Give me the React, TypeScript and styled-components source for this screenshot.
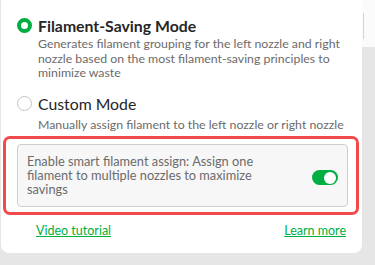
import React from "react";
import styled, { createGlobalStyle } from "styled-components";

const Global = createGlobalStyle`
  html, body { margin: 0; padding: 0; }
  body {
    background: #e6e6e6;
    font-family: Lato, "Noto Sans", Arial, sans-serif;
    width: 375px;
    height: 265px;
    overflow: hidden;
  }
`;

const Page = styled.div`
  display: flex;
  width: 375px;
  height: 265px;
  padding-left: 1px;
  box-sizing: border-box;
`;

const Card = styled.div`
  width: 361px;
  height: 259px;
  margin-top: -6px;
  background: #fff;
  border-radius: 8px;
  box-sizing: border-box;
  padding: 20px 0 0 0;
  display: flex;
  flex-direction: column;
`;

const Side = styled.div`
  flex: 1;
  display: flex;
  flex-direction: column;
`;

const SideTop = styled.div`
  height: 47px;
  background: #fbfbfb;
  padding: 13px 0 0 1px;
  box-sizing: border-box;
`;

const ScrollLine = styled.div`
  width: 1px;
  height: 26px;
  background: #d4d4d4;
`;

const Option = styled.div<{ $gap?: number }>`
  display: flex;
  flex-direction: column;
  padding-left: 16px;
  padding-right: 2px;
  margin-top: ${(p) => p.$gap ?? 0}px;
`;

const OptionHead = styled.div`
  display: flex;
  align-items: center;
  gap: 6px;
  height: 22px;
`;

const Radio = styled.span<{ $checked?: boolean }>`
  width: 15px;
  height: 15px;
  border-radius: 50%;
  box-sizing: border-box;
  border: ${(p) => (p.$checked ? "4.5px solid #00ae42" : "1px solid #c4c4c4")};
  background: #fff;
  flex-shrink: 0;
`;

const Title = styled.span<{ $bold?: boolean }>`
  font-size: 15.8px;
  font-weight: ${(p) => (p.$bold ? 700 : 400)};
  color: #262626;
`;

const Desc = styled.div<{ $top?: number }>`
  padding-left: 21px;
  font-size: 12.3px;
  line-height: 14.5px;
  color: #6b6b6b;
  margin-top: ${(p) => p.$top ?? 1}px;
`;

const Highlight = styled.div`
  margin: 4px 0 0 2px;
  width: 356px;
  border: 3px solid #f24a4a;
  border-radius: 7px;
  box-sizing: border-box;
  padding: 5px 8px 5px 11px;
`;

const SmartBox = styled.div`
  background: #f7f7f7;
  border: 1px solid #cfcfcf;
  border-radius: 4px;
  display: flex;
  align-items: center;
  justify-content: space-between;
  padding: 9px 9px 10px 9px;
`;

const SmartText = styled.div`
  width: 260px;
  font-size: 12.8px;
  line-height: 14px;
  color: #6b6b6b;
`;

const Toggle = styled.span`
  width: 26px;
  height: 15px;
  border-radius: 8px;
  background: #00ae42;
  position: relative;
  flex-shrink: 0;
  margin-top: 5px;
  &::after {
    content: "";
    position: absolute;
    right: 2px;
    top: 1.5px;
    width: 12px;
    height: 12px;
    border-radius: 50%;
    background: #fff;
  }
`;

const Links = styled.div`
  display: flex;
  justify-content: space-between;
  padding: 8px 16px 0 35px;
`;

const Link = styled.a`
  font-size: 12.5px;
  color: #00ae42;
  text-decoration: underline;
  cursor: pointer;
`;

export default function App() {
  return (
    <>
      <Global />
      <Page>
        <Card>
          <Option>
            <OptionHead>
              <Radio $checked />
              <Title $bold>Filament-Saving Mode</Title>
            </OptionHead>
            <Desc>
              Generates filament grouping for the left nozzle and right nozzle based on the most
              filament-saving principles to minimize waste
            </Desc>
          </Option>
          <Option $gap={12}>
            <OptionHead>
              <Radio />
              <Title>Custom Mode</Title>
            </OptionHead>
            <Desc $top={3}>Manually assign filament to the left nozzle or right nozzle</Desc>
          </Option>
          <Highlight>
            <SmartBox>
              <SmartText>
                Enable smart filament assign: Assign one filament to multiple nozzles to maximize
                savings
              </SmartText>
              <Toggle />
            </SmartBox>
          </Highlight>
          <Links>
            <Link>Video tutorial</Link>
            <Link>Learn more</Link>
          </Links>
        </Card>
        <Side>
          <SideTop>
            <ScrollLine />
          </SideTop>
        </Side>
      </Page>
    </>
  );
}
